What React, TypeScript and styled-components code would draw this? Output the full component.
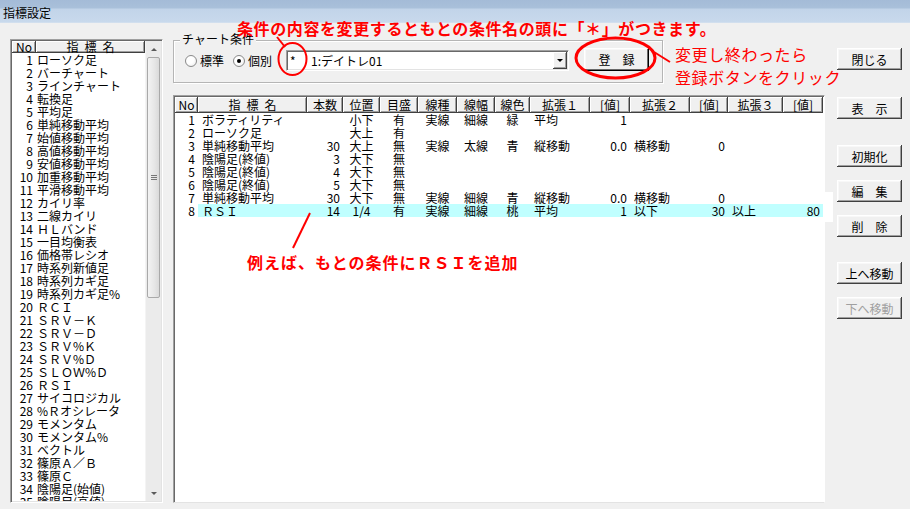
import React from "react";
import styled, { createGlobalStyle } from "styled-components";

const GlobalStyle = createGlobalStyle`
  html, body { margin: 0; padding: 0; background: #f0f0f0; }
  body {
    font-family: "Noto Sans CJK JP", "Noto Sans", sans-serif;
    font-size: 12px;
    color: #000;
  }
  * { box-sizing: border-box; }
`;

const Window = styled.div`
  position: relative;
  width: 910px;
  height: 509px;
  overflow: hidden;
  background: #f0f0f0;
  display: flex;
  flex-direction: column;
`;

const TitleBar = styled.div`
  height: 23px;
  flex: none;
  background: linear-gradient(#a4bbd7 0, #a9c0da 8px, #c2d4e9 9px, #c8d9ec 22px, #dbe5f0 23px);
  display: flex;
  align-items: center;
  padding-left: 3px;
  padding-top: 3px;
  font-size: 12px;
  line-height: 1;
`;

const Body = styled.div`
  flex: 1;
  display: flex;
  padding: 16px 0 6px 10px;
`;

/* ---------- left list ---------- */
const ListBox = styled.div`
  width: 153px;
  height: 464px;
  display: flex;
  background: #fff;
  border: 1px solid;
  border-color: #a0a0a0 #fff #fff #a0a0a0;
  box-shadow: inset 1px 1px 0 #696969, inset -1px -1px 0 #e3e3e3;
  padding: 1px;
`;

const ListContent = styled.div`
  flex: 1;
  overflow: hidden;
  display: flex;
  flex-direction: column;
`;

const ListHead = styled.div`
  display: grid;
  grid-template-columns: 24px 1fr;
  height: 12px;
  flex: none;
`;

const HeadCell = styled.div`
  background: #f0f0f0;
  box-shadow: inset -1px -1px 0 #404040, inset 1px 1px 0 #fff, inset -2px -2px 0 #a0a0a0;
  text-align: center;
  line-height: 12px;
  font-size: 12px;
  white-space: nowrap;
`;

const ListRow = styled.div`
  display: grid;
  grid-template-columns: 24px 1fr;
  height: 13px;
  line-height: 13px;
  flex: none;
  white-space: nowrap;
`;

const ListNo = styled.span`
  text-align: right;
  padding-right: 3px;
`;

const ListName = styled.span`
  padding-left: 1px;
`;

const ScrollBar = styled.div`
  width: 16px;
  display: flex;
  flex-direction: column;
  background: #ebebeb;
  border-left: 1px solid #f4f4f4;
`;

const ArrowBtn = styled.div`
  height: 16px;
  flex: none;
  display: flex;
  align-items: center;
  justify-content: center;
`;

const Tri = styled.span<{ $down?: boolean; $muted?: boolean }>`
  width: 0;
  height: 0;
  border-left: 3px solid transparent;
  border-right: 3px solid transparent;
  ${(p) =>
    p.$down
      ? `border-top: 3px solid ${p.$muted ? "#5a5a5a" : "#000"};`
      : `border-bottom: 3px solid ${p.$muted ? "#5a5a5a" : "#000"};`}
`;

const Track = styled.div`
  flex: 1;
  padding: 0 1px;
`;

const Thumb = styled.div`
  height: 241px;
  border: 1px solid #a9a9a9;
  border-radius: 2px;
  background: linear-gradient(90deg, #f3f3f3, #e6e6e6 60%, #dadada);
  display: flex;
  flex-direction: column;
  align-items: center;
  justify-content: center;
  gap: 1px;
`;

const Grip = styled.span`
  width: 6px;
  height: 1px;
  background: #777;
`;

/* ---------- main ---------- */
const Main = styled.div`
  width: 652px;
  margin-left: 10px;
  display: flex;
  flex-direction: column;
`;

const GroupBox = styled.div`
  position: relative;
  width: 490px;
  height: 43px;
  margin-top: 1px;
  border: 1px solid #b5b5b5;
  box-shadow: inset 1px 1px 0 #fff, 1px 1px 0 #fff;
  display: flex;
  align-items: center;
  padding: 0 0 2px 11px;
`;

const Legend = styled.span`
  position: absolute;
  left: 6px;
  top: -9px;
  padding: 0 2px;
  background: #f0f0f0;
  line-height: 14px;
`;

const RadioLabel = styled.label<{ $w: number }>`
  width: ${(p) => p.$w}px;
  flex: none;
  display: inline-flex;
  align-items: center;
  gap: 3px;
  white-space: nowrap;
`;

const RadioDot = styled.span<{ $on?: boolean }>`
  width: 12px;
  height: 12px;
  flex: none;
  border-radius: 50%;
  border: 1px solid #8a8a8a;
  background: radial-gradient(circle at 40% 40%, #fff 40%, #e6e6e6);
  display: inline-flex;
  align-items: center;
  justify-content: center;
  &::after {
    content: "";
    display: ${(p) => (p.$on ? "block" : "none")};
    width: 4px;
    height: 4px;
    border-radius: 50%;
    background: #000;
  }
`;

const Combo = styled.div`
  width: 283px;
  height: 21px;
  flex: none;
  background: #fff;
  border: 1px solid;
  border-color: #a0a0a0 #fff #fff #a0a0a0;
  box-shadow: inset 1px 1px 0 #696969, inset -1px -1px 0 #e3e3e3;
  display: flex;
  align-items: center;
  padding: 1px 1px 1px 3px;
`;

const ComboStar = styled.span`
  width: 21px;
  flex: none;
`;

const ComboText = styled.span`
  flex: 1;
  white-space: nowrap;
`;

const DropBtn = styled.div`
  width: 14px;
  height: 17px;
  background: #f0f0f0;
  box-shadow: inset -1px -1px 0 #404040, inset 1px 1px 0 #fff, inset -2px -2px 0 #a0a0a0;
  display: flex;
  align-items: center;
  justify-content: center;
`;

const Button = styled.div<{ $top?: number; $disabled?: boolean }>`
  width: 65px;
  height: 22px;
  flex: none;
  margin-top: ${(p) => p.$top ?? 0}px;
  background: #f0f0f0;
  box-shadow: inset -1px -1px 0 #404040, inset 1px 1px 0 #fff, inset -2px -2px 0 #a0a0a0,
    inset 2px 2px 0 #f8f8f8;
  display: flex;
  align-items: center;
  justify-content: center;
  color: ${(p) => (p.$disabled ? "#a0a0a0" : "#000")};
  white-space: nowrap;
  font-size: 12px;
`;

const RegisterButton = styled(Button)`
  height: 23px;
  margin-left: 15px;
  margin-bottom: 3px;
  box-shadow: inset -1px -1px 0 #000, inset 1px 1px 0 #fff, inset -2px -2px 0 #696969,
    inset 2px 2px 0 #f8f8f8;
`;

const TableFrame = styled.div`
  flex: 1;
  margin-top: 12px;
  background: #fff;
  border: 1px solid;
  border-color: #a0a0a0 #fff #e3e3e3 #a0a0a0;
  box-shadow: inset 1px 1px 0 #696969;
  padding: 1px;
  position: relative;
`;

const TRow = styled.div<{ $cols: string; $h: number }>`
  display: grid;
  grid-template-columns: ${(p) => p.$cols};
  height: ${(p) => p.$h}px;
  line-height: ${(p) => p.$h}px;
  white-space: nowrap;
`;

const THead = styled(HeadCell)`
  line-height: 16px;
`;

const TCell = styled.div<{ $align: string; $sel?: boolean }>`
  text-align: ${(p) => p.$align};
  padding: ${(p) => (p.$align === "right" ? "0 3px 0 0" : p.$align === "left" ? "0 0 0 4px" : "0")};
  background: ${(p) => (p.$sel ? "#c0ffff" : "transparent")};
`;

const RowTail = styled.div<{ $sel?: boolean }>`
  background: ${(p) => (p.$sel ? "#c0ffff" : "transparent")};
`;

const RightCol = styled.div`
  margin-left: 12px;
  display: flex;
  flex-direction: column;
`;

/* ---------- annotations ---------- */
const Note = styled.div<{ $x: number; $y: number; $bold?: boolean; $ls: number; $lh: number }>`
  position: absolute;
  left: ${(p) => p.$x}px;
  top: ${(p) => p.$y}px;
  color: #f00;
  font-size: 16px;
  line-height: ${(p) => p.$lh}px;
  font-weight: ${(p) => (p.$bold ? 700 : 400)};
  letter-spacing: ${(p) => p.$ls}px;
  white-space: nowrap;
  pointer-events: none;
`;

const Overlay = styled.svg`
  position: absolute;
  left: 0;
  top: 0;
  pointer-events: none;
`;

const Patch = styled.div`
  position: absolute;
  left: 825px;
  top: 192px;
  width: 8px;
  height: 30px;
  background: #fff;
`;

const listItems = [
  "ローソク足", "バーチャート", "ラインチャート", "転換足", "平均足",
  "単純移動平均", "始値移動平均", "高値移動平均", "安値移動平均", "加重移動平均",
  "平滑移動平均", "カイリ率", "二線カイリ", "ＨＬバンド", "一目均衡表",
  "価格帯レシオ", "時系列新値足", "時系列カギ足", "時系列カギ足%", "ＲＣＩ",
  "ＳＲＶ－Ｋ", "ＳＲＶ－Ｄ", "ＳＲＶ%Ｋ", "ＳＲＶ%Ｄ", "ＳＬＯＷ%Ｄ",
  "ＲＳＩ", "サイコロジカル", "%Ｒオシレータ", "モメンタム", "モメンタム%",
  "ベクトル", "篠原Ａ／Ｂ", "篠原Ｃ", "陰陽足(始値)", "陰陽足(高値)",
];

const cols = [
  { w: 23, align: "right", label: "No" },
  { w: 109, align: "left", label: "指\u2002標\u2002名" },
  { w: 36, align: "right", label: "本数" },
  { w: 37, align: "center", label: "位置" },
  { w: 38, align: "center", label: "目盛" },
  { w: 39, align: "center", label: "線種" },
  { w: 38, align: "center", label: "線幅" },
  { w: 35, align: "center", label: "線色" },
  { w: 60, align: "left", label: "拡張１" },
  { w: 40, align: "right", label: "[値]" },
  { w: 60, align: "left", label: "拡張２" },
  { w: 38, align: "right", label: "[値]" },
  { w: 55, align: "left", label: "拡張３" },
  { w: 40, align: "right", label: "[値]" },
];
const colTemplate = cols.map((c) => `${c.w}px`).join(" ") + " 1fr";

const rows: string[][] = [
  ["1", "ボラティリティ", "", "小下", "有", "実線", "細線", "緑", "平均", "1", "", "", "", ""],
  ["2", "ローソク足", "", "大上", "有", "", "", "", "", "", "", "", "", ""],
  ["3", "単純移動平均", "30", "大上", "無", "実線", "太線", "青", "縦移動", "0.0", "横移動", "0", "", ""],
  ["4", "陰陽足(終値)", "3", "大下", "無", "", "", "", "", "", "", "", "", ""],
  ["5", "陰陽足(終値)", "4", "大下", "無", "", "", "", "", "", "", "", "", ""],
  ["6", "陰陽足(終値)", "5", "大下", "無", "", "", "", "", "", "", "", "", ""],
  ["7", "単純移動平均", "30", "大下", "無", "実線", "細線", "青", "縦移動", "0.0", "横移動", "0", "", ""],
  ["8", "ＲＳＩ", "14", "1/4", "有", "実線", "細線", "桃", "平均", "1", "以下", "30", "以上", "80"],
];

const rightButtons: { label: string; top: number; disabled?: boolean }[] = [
  { label: "閉じる", top: 9 },
  { label: "表\u3000示", top: 27 },
  { label: "初期化", top: 26 },
  { label: "編\u3000集", top: 13 },
  { label: "削\u3000除", top: 13 },
  { label: "上へ移動", top: 25 },
  { label: "下へ移動", top: 13, disabled: true },
];

export default function App() {
  return (
    <>
      <GlobalStyle />
      <Window>
        <TitleBar>指標設定</TitleBar>
        <Body>
          <ListBox>
            <ListContent>
              <ListHead>
                <HeadCell>No</HeadCell>
                <HeadCell>指&#x2002;標&#x2002;名</HeadCell>
              </ListHead>
              {listItems.map((name, i) => (
                <ListRow key={i}>
                  <ListNo>{i + 1}</ListNo>
                  <ListName>{name}</ListName>
                </ListRow>
              ))}
            </ListContent>
            <ScrollBar>
              <ArrowBtn>
                <Tri $muted />
              </ArrowBtn>
              <Track>
                <Thumb>
                  <Grip />
                  <Grip />
                  <Grip />
                </Thumb>
              </Track>
              <ArrowBtn>
                <Tri $down $muted />
              </ArrowBtn>
            </ScrollBar>
          </ListBox>

          <Main>
            <GroupBox>
              <Legend>チャート条件</Legend>
              <RadioLabel $w={48}>
                <RadioDot />
                標準
              </RadioLabel>
              <RadioLabel $w={53}>
                <RadioDot $on />
                個別
              </RadioLabel>
              <Combo>
                <ComboStar>*</ComboStar>
                <ComboText>1:デイトレ01</ComboText>
                <DropBtn>
                  <Tri $down />
                </DropBtn>
              </Combo>
              <RegisterButton>登&#x3000;録</RegisterButton>
            </GroupBox>

            <TableFrame>
              <TRow $cols={colTemplate} $h={16}>
                {cols.map((c, i) => (
                  <THead key={i}>{c.label}</THead>
                ))}
                <RowTail />
              </TRow>
              {rows.map((r, ri) => {
                const sel = ri === 7;
                return (
                  <TRow key={ri} $cols={colTemplate} $h={13}>
                    {r.map((v, ci) => (
                      <TCell key={ci} $align={cols[ci].align} $sel={sel && ci > 0}>
                        {v}
                      </TCell>
                    ))}
                    <RowTail $sel={sel} />
                  </TRow>
                );
              })}
            </TableFrame>
          </Main>

          <RightCol>
            {rightButtons.map((b) => (
              <Button key={b.label} $top={b.top} $disabled={b.disabled}>
                {b.label}
              </Button>
            ))}
          </RightCol>
        </Body>

        <Patch />

        <Overlay width={910} height={509} viewBox="0 0 910 509">
          <ellipse cx={292.5} cy={59} rx={14} ry={16} fill="none" stroke="#f00" strokeWidth={2} />
          <line x1={277} y1={37} x2={285} y2={47} stroke="#f00" strokeWidth={2} />
          <ellipse cx={615.5} cy={58} rx={39.5} ry={20} fill="none" stroke="#f00" strokeWidth={3} />
          <line x1={654} y1={52} x2={670} y2={62} stroke="#f00" strokeWidth={2} />
          <line x1={310} y1={213} x2={293} y2={248} stroke="#f00" strokeWidth={2} />
        </Overlay>

        <Note $x={237} $y={20} $bold $ls={0.6} $lh={16}>
          条件の内容を変更するともとの条件名の頭に「＊」がつきます。
        </Note>
        <Note $x={675} $y={43} $ls={0.6} $lh={23}>
          変更し終わったら
          <br />
          登録ボタンをクリック
        </Note>
        <Note $x={247} $y={254} $bold $ls={1} $lh={16}>
          例えば、もとの条件にＲＳＩを追加
        </Note>
      </Window>
    </>
  );
}
